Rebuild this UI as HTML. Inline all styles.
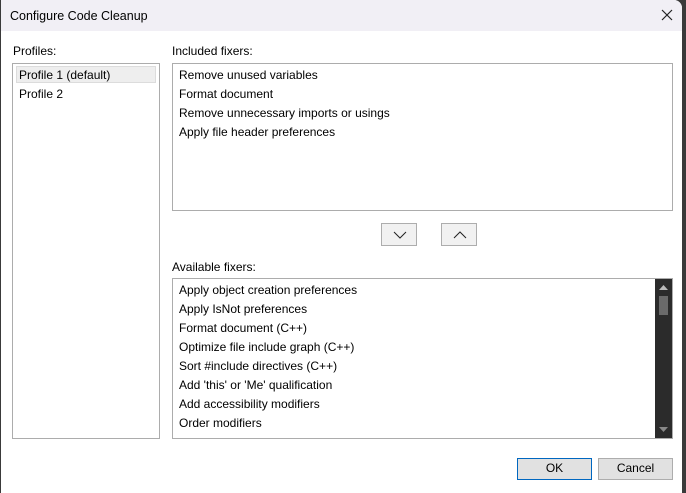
<!DOCTYPE html>
<html><head><style>
body{margin:0;width:686px;height:493px;background:#3a3a3a;position:relative;overflow:hidden;font-family:"Liberation Sans",sans-serif;font-size:12px;color:#000}
.win{position:absolute;left:1px;top:0;width:681px;height:493px;background:#fff;border-radius:0 8px 0 0;overflow:hidden}
.tb{position:absolute;left:0;top:0;width:100%;height:31px;background:#f1eff5}
.t{position:absolute;left:9px;top:9px;font-size:12.5px}
.x{position:absolute;right:10px;top:6px;font-size:16px}
.a{position:absolute}
.box{position:absolute;border:1px solid #acacac;background:#fff}
.it{position:absolute;left:6px;white-space:nowrap}
.btn{position:absolute;background:#f1f1f1;border:1px solid #adadad;box-sizing:border-box}
.b2{position:absolute;background:#e1e1e1;border:1px solid #adadad;box-sizing:border-box;text-align:center;line-height:19px}
</style></head><body>
<div class="win">
<div class="tb"><div class="t">Configure Code Cleanup</div>
<svg class="a" style="right:9px;top:9px" width="12" height="12"><path d="M1 1L11 11M11 1L1 11" stroke="#222" stroke-width="1.2"/></svg></div>
<div class="a" style="left:12px;top:44px">Profiles:</div>
<div class="box" style="left:11px;top:63px;width:146px;height:374px">
<div class="a" style="left:3px;top:2px;width:140px;height:17px;background:#eeeeee;border:1px solid #dcdcdc;box-sizing:border-box"></div>
<div class="it" style="top:4px">Profile 1 (default)</div>
<div class="it" style="top:23px">Profile 2</div></div>
<div class="a" style="left:171px;top:44px">Included fixers:</div>
<div class="box" style="left:171px;top:63px;width:499px;height:146px">
<div class="it" style="top:4px">Remove unused variables</div>
<div class="it" style="top:23px">Format document</div>
<div class="it" style="top:42px">Remove unnecessary imports or usings</div>
<div class="it" style="top:61px">Apply file header preferences</div></div>
<div class="btn" style="left:380px;top:223px;width:36px;height:23px"><svg class="a" style="left:11px;top:7px" width="14" height="8"><path d="M1 1L7 7L13 1" stroke="#222" fill="none"/></svg></div>
<div class="btn" style="left:440px;top:223px;width:36px;height:23px"><svg class="a" style="left:11px;top:7px" width="14" height="8"><path d="M1 7L7 1L13 7" stroke="#222" fill="none"/></svg></div>
<div class="a" style="left:171px;top:260px">Available fixers:</div>
<div class="box" style="left:171px;top:278px;width:499px;height:159px">
<div class="it" style="top:4px">Apply object creation preferences</div>
<div class="it" style="top:23px">Apply IsNot preferences</div>
<div class="it" style="top:42px">Format document (C++)</div>
<div class="it" style="top:61px">Optimize file include graph (C++)</div>
<div class="it" style="top:80px">Sort #include directives (C++)</div>
<div class="it" style="top:99px">Add 'this' or 'Me' qualification</div>
<div class="it" style="top:118px">Add accessibility modifiers</div>
<div class="it" style="top:137px">Order modifiers</div>
<div class="a" style="right:0;top:0;width:17px;height:159px;background:#2b2b2b">
<svg class="a" style="left:4px;top:6px" width="9" height="5"><path d="M0 5L4.5 0L9 5Z" fill="#bbb"/></svg>
<div class="a" style="left:4px;top:17px;width:9px;height:19px;background:#6a6a6a"></div>
<svg class="a" style="left:4px;top:148px" width="9" height="5"><path d="M0 0L4.5 5L9 0Z" fill="#888"/></svg></div></div>
<div class="b2" style="left:516px;top:458px;width:75px;height:22px;border-color:#0067c0">OK</div>
<div class="b2" style="left:597px;top:458px;width:75px;height:22px">Cancel</div>
</div>
</body></html>
